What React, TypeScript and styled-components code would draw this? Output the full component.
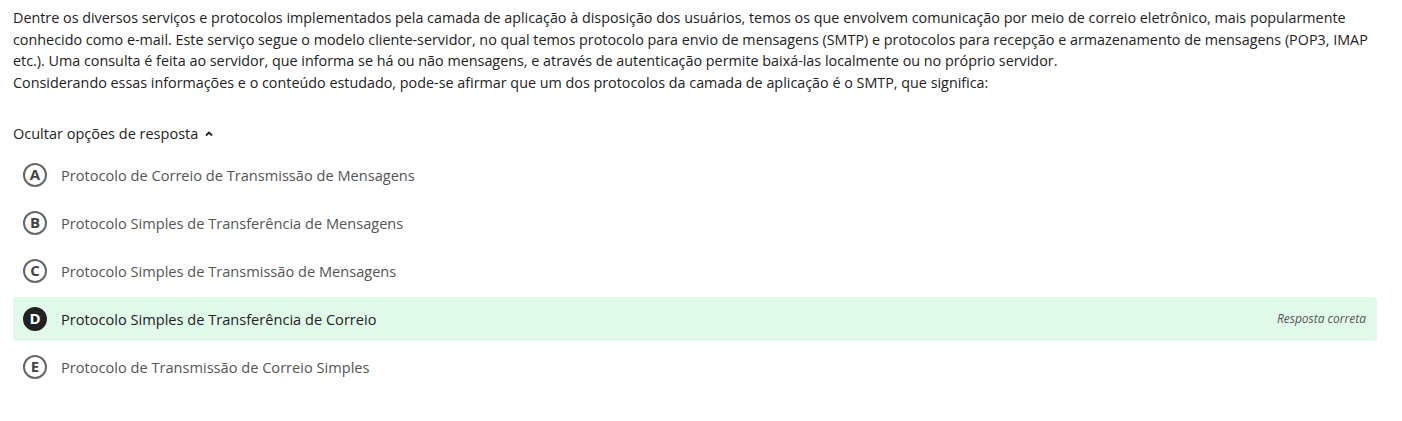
import React from 'react';
import styled, { createGlobalStyle } from 'styled-components';

const GlobalStyle = createGlobalStyle`
  body {
    margin: 0;
    background: #fff;
    font-family: "Open Sans", "Noto Sans", sans-serif;
  }
`;

const Page = styled.div`
  padding: 7px 25px 0 13px;
  width: 1364px;
`;

const Statement = styled.p`
  margin: 0;
  font-size: 14.35px;
  line-height: 21.5px;
  color: #222;
`;

const Toggle = styled.button`
  display: flex;
  align-items: center;
  gap: 6px;
  margin-top: 30px;
  padding: 0;
  border: none;
  background: none;
  font-family: inherit;
  font-size: 14.5px;
  line-height: 21.5px;
  color: #222;
  cursor: pointer;
`;

const Options = styled.div`
  display: flex;
  flex-direction: column;
  gap: 4px;
  margin-top: 8px;
`;

const Option = styled.div<{ $correct?: boolean }>`
  display: flex;
  align-items: center;
  height: 44px;
  padding: 0 11px 0 10px;
  border-radius: 3px;
  background: ${({ $correct }) => ($correct ? '#e1f9e9' : 'transparent')};
`;

const Letter = styled.span<{ $filled?: boolean }>`
  display: flex;
  align-items: center;
  justify-content: center;
  width: 24px;
  height: 24px;
  box-sizing: border-box;
  border-radius: 50%;
  border: 2px solid ${({ $filled }) => ($filled ? '#222' : '#666')};
  background: ${({ $filled }) => ($filled ? '#222' : 'transparent')};
  color: ${({ $filled }) => ($filled ? '#fff' : '#444')};
  font-size: 15px;
  font-weight: 700;
  line-height: 1;
`;

const Label = styled.span<{ $strong?: boolean }>`
  flex: 1;
  margin-left: 14px;
  font-size: 14.6px;
  font-weight: 500;
  color: ${({ $strong }) => ($strong ? '#222' : '#555')};
`;

const Verdict = styled.span`
  font-size: 12px;
  font-style: italic;
  color: #555;
`;

const options = [
  { letter: 'A', text: 'Protocolo de Correio de Transmissão de Mensagens' },
  { letter: 'B', text: 'Protocolo Simples de Transferência de Mensagens' },
  { letter: 'C', text: 'Protocolo Simples de Transmissão de Mensagens' },
  { letter: 'D', text: 'Protocolo Simples de Transferência de Correio', correct: true },
  { letter: 'E', text: 'Protocolo de Transmissão de Correio Simples' },
];

const ChevronUp = () => (
  <svg width="10" height="10" viewBox="0 0 10 10">
    <path d="M2 6.5 L5 3.5 L8 6.5" fill="none" stroke="#222" strokeWidth="1.8" />
  </svg>
);

const App = () => {
  return (
    <Page>
      <GlobalStyle />
      <Statement>
        Dentre os diversos serviços e protocolos implementados pela camada de aplicação à disposição dos usuários, temos os que envolvem comunicação por meio de correio eletrônico, mais popularmente conhecido como e-mail. Este serviço segue o modelo cliente-servidor, no qual temos protocolo para envio de mensagens (SMTP) e protocolos para recepção e armazenamento de mensagens (POP3, IMAP etc.). Uma consulta é feita ao servidor, que informa se há ou não mensagens, e através de autenticação permite baixá-las localmente ou no próprio servidor.
        <br />
        Considerando essas informações e o conteúdo estudado, pode-se afirmar que um dos protocolos da camada de aplicação é o SMTP, que significa:
      </Statement>
      <Toggle>
        Ocultar opções de resposta
        <ChevronUp />
      </Toggle>
      <Options>
        {options.map((o) => (
          <Option key={o.letter} $correct={o.correct}>
            <Letter $filled={o.correct}>{o.letter}</Letter>
            <Label $strong={o.correct}>{o.text}</Label>
            {o.correct && <Verdict>Resposta correta</Verdict>}
          </Option>
        ))}
      </Options>
    </Page>
  );
};

export default App;
